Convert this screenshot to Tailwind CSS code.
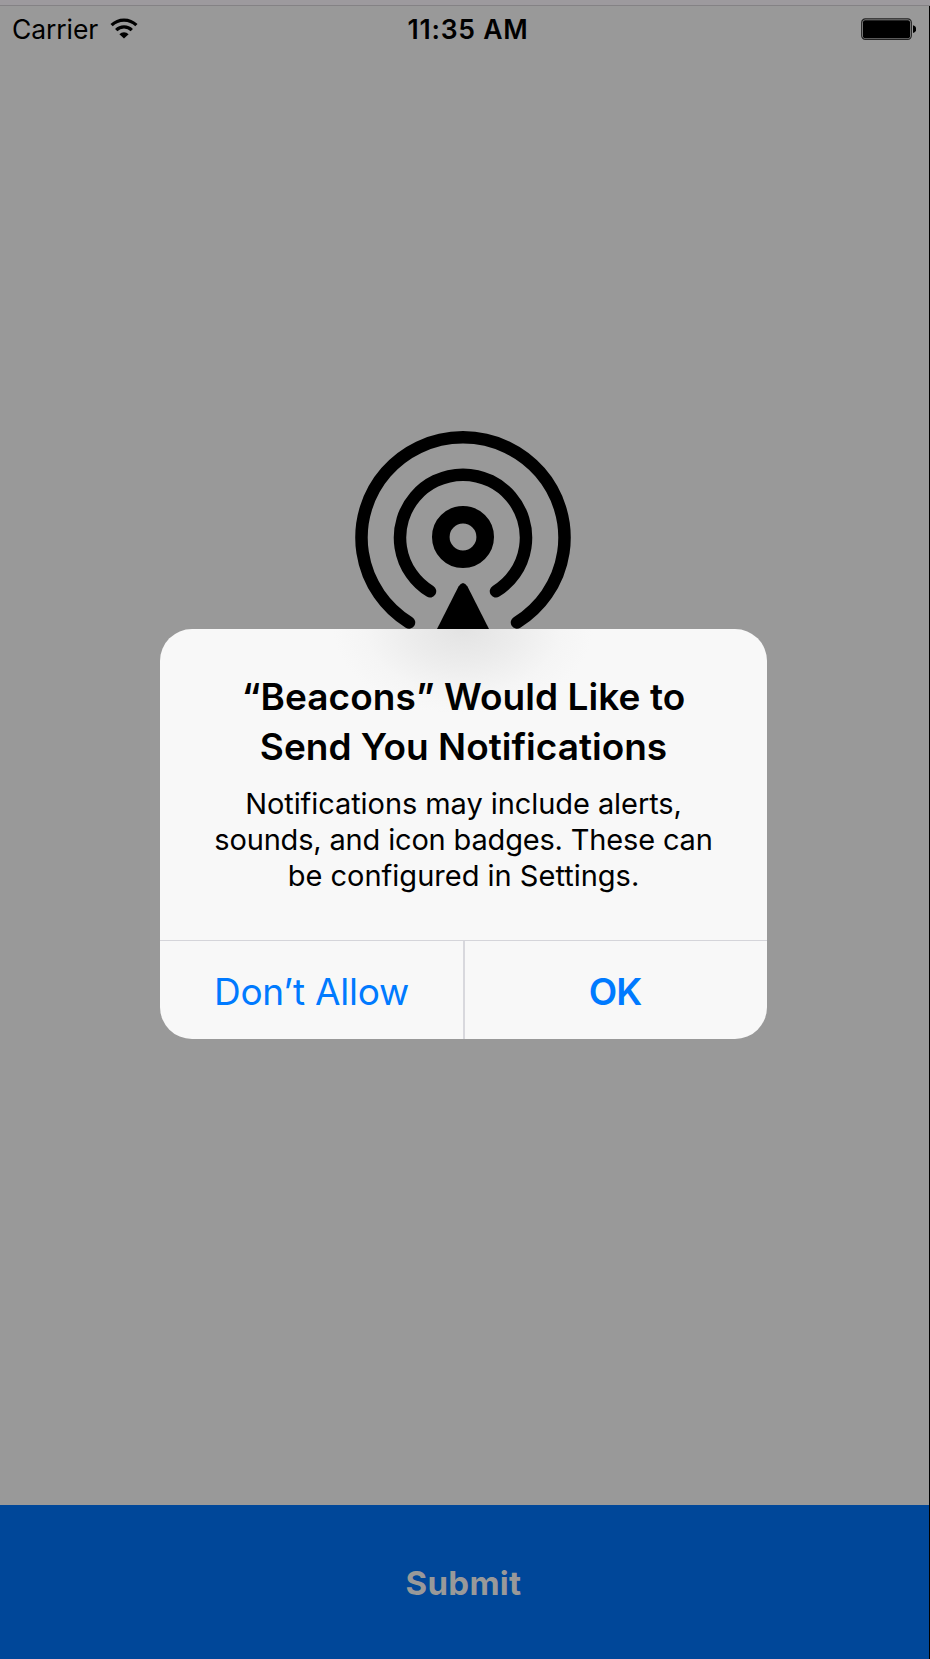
<!DOCTYPE html>
<html lang="en">
<head>
<meta charset="utf-8">
<title>Beacons</title>
<script src="https://cdn.jsdelivr.net/npm/@tailwindcss/browser@4"></script>
</head>
<body class="font-['Inter',sans-serif] text-black">
<div class="relative h-[1659px] w-[930px] overflow-hidden bg-[#999999]">
  <div class="flex h-full flex-col">
    <div class="h-[6px] border-b border-[#848285] bg-[#9d9a9e]"></div>
    <div class="flex min-h-0 flex-1 flex-col border-r border-black">
      <header class="grid h-[46px] grid-cols-3 items-center pr-[13px] pl-[12px] text-[26.5px]">
        <div class="flex items-center gap-3"><span class="pt-[2px] tracking-[-0.1px]">Carrier</span>
          <svg class="mb-[2px] h-[21px] w-[28px]" viewBox="0 0 28 21"><g fill="none" stroke="#000" stroke-width="3.2"><path d="M1.600 7.200a17.600 17.600 0 0 1 24.800 0M6.200 12.100a11 11 0 0 1 15.600 0"/></g><path d="M9.400 16.200a6.600 6.600 0 0 1 9.200 0L14 20.600z"/></svg>
        </div>
        <span class="pt-[2px] pl-[8px] text-center font-semibold tracking-[0.8px]">11:35 AM</span>
        <svg class="h-[23px] w-[55px] justify-self-end" viewBox="0 0 55 23"><rect x=".7" y=".9" width="49.600" height="20.400" rx="3.600" fill="none" stroke="#222" stroke-width="1.200"/><rect x="2" y="2.200" width="47" height="18" rx="2"/><path d="M52 7.300c4.200 1 4.200 6.600 0 7.600z"/></svg>
      </header>
      <main class="flex flex-1 justify-center pt-[377px] pr-[3px]">
        <svg class="h-[216px] w-[216px]" viewBox="355 429 216 216"><g fill="none" stroke="#000" stroke-width="12.500" stroke-linecap="round"><path d="M409 622.500a101.500 100.300 0 1 1 108 0"/><path d="M430 591.300a63 63 0 1 1 66 0"/><circle cx="463" cy="537" r="22.200" stroke-width="17.600"/></g><path d="M458.500 586.500q4.500-7 9 0L490 631h-54z"/></svg>
      </main>
      <button class="flex h-[154px] items-center justify-center bg-[#004799] pt-[4px] pr-[2px] text-[33px] font-bold tracking-[0.3px] text-[#999999]"><span>Submit</span></button>
    </div>
  </div>
  <section class="absolute top-[629px] left-[160px] flex h-[410px] w-[607px] flex-col overflow-hidden rounded-[32px] bg-[#f8f8f8] bg-[radial-gradient(ellipse_130px_85px_at_303px_0px,#e3e3e3,#ececec_40%,#f5f5f5_75%,#f8f8f8)]">
    <div class="flex h-[311px] flex-col items-center pt-[43px] whitespace-nowrap">
      <h1 class="flex flex-col items-center text-[37px] leading-[50px] font-semibold"><span class="tracking-[0.07px]">“Beacons” Would Like to</span><span>Send You Notifications</span></h1>
      <p class="mt-[14px] flex flex-col items-center text-[29px] leading-[36px]"><span class="tracking-[-0.07px]">Notifications may include alerts,</span><span class="tracking-[-0.17px]">sounds, and icon badges. These can</span><span>be configured in Settings.</span></p>
    </div>
    <div class="flex flex-1 border-t border-[#d5d5da] text-[37px] text-[#007aff]">
      <button class="flex w-[305px] items-center justify-center border-r-2 border-[#d8d8dd] pt-[3px] tracking-[-0.27px]">Don’t Allow</button>
      <button class="flex flex-1 items-center justify-center pt-[3px] pr-[2px] font-semibold tracking-[-1px]">OK</button>
    </div>
  </section>
</div>
</body>
</html>
